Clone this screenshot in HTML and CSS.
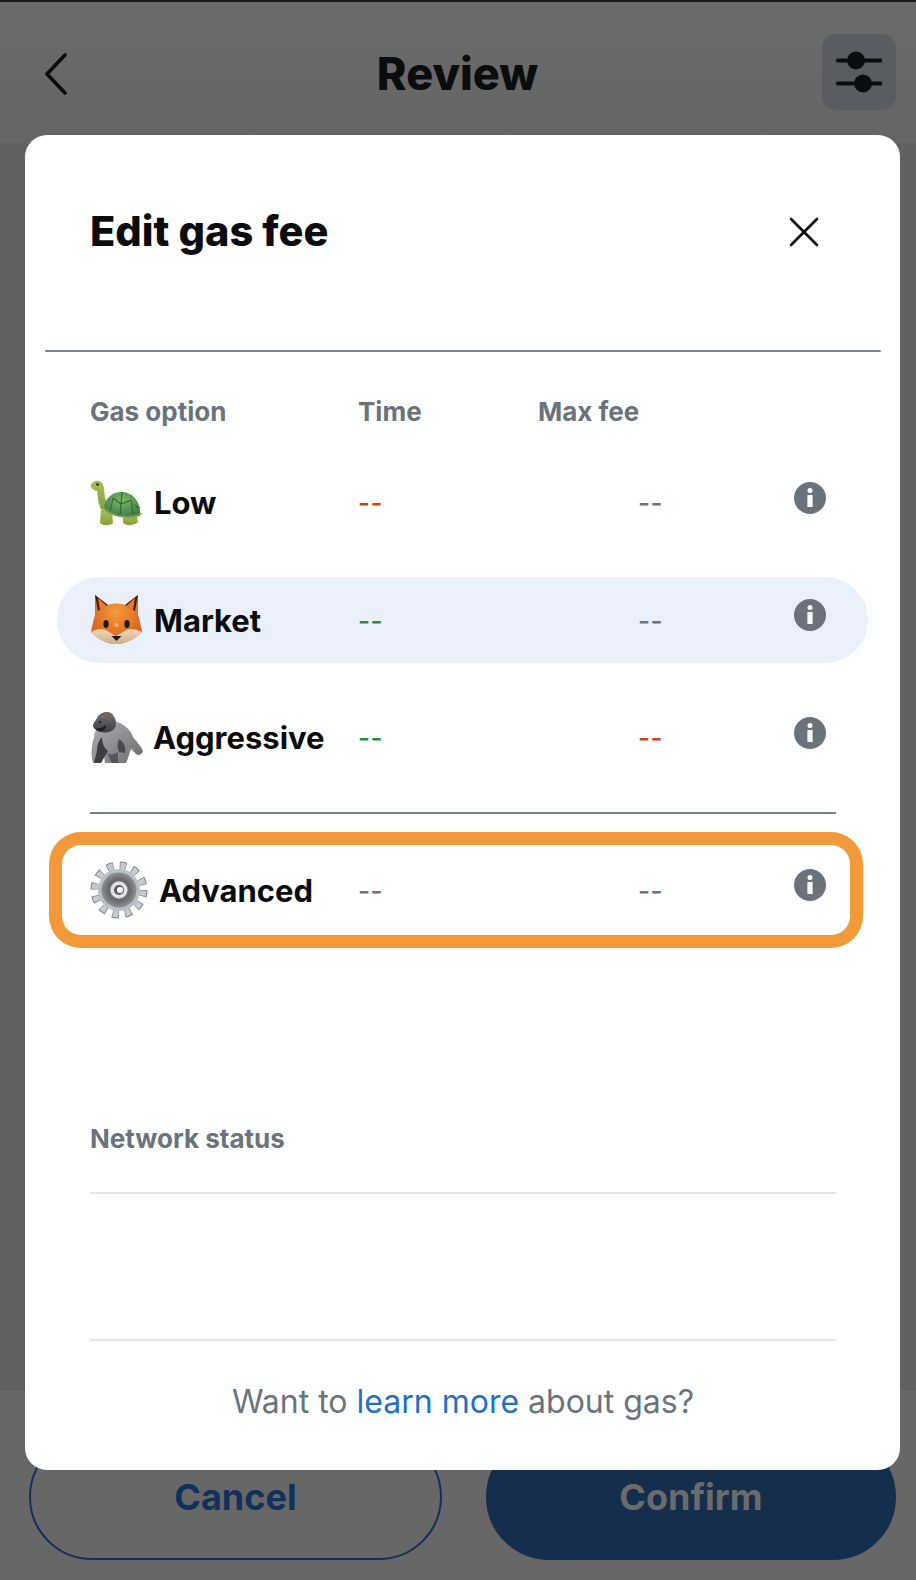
FILE: index.html
```html
<!DOCTYPE html>
<html lang="en">
<head>
  <meta charset="UTF-8" />
  <meta name="viewport" content="width=device-width, initial-scale=1.0" />
  <title>Edit gas fee</title>
  <link rel="stylesheet" href="styles.css">
</head>
<body>
  <div class="page">
    <header class="topbar">
      <svg class="back" width="26" height="42" viewBox="0 0 26 42"><path d="M22 2 L4 21 L22 40" fill="none" stroke="#0b0c0d" stroke-width="3.6" stroke-linecap="round" stroke-linejoin="round"/></svg>
      <h1>Review</h1>
      <div class="filter-btn">
        <svg width="46" height="46" viewBox="0 0 46 46">
          <path d="M2 11.5H10M27 11.5H45M2 34.5H17M34 34.5H45" stroke="#0b0c0d" stroke-width="4" stroke-linecap="round"/>
          <circle cx="20" cy="11.5" r="9" fill="#0b0c0d"/>
          <circle cx="27" cy="34.5" r="9" fill="#0b0c0d"/>
        </svg>
      </div>
    </header>
    <div class="middle"></div>
    <footer class="actions">
      <button class="btn btn-cancel">Cancel</button>
      <button class="btn btn-confirm">Confirm</button>
    </footer>
  </div>

  <section class="modal">
    <div class="modal-head">
      <h2>Edit gas fee</h2>
      <svg class="close" width="30" height="30" viewBox="0 0 30 30"><path d="M2 2L28 28M28 2L2 28" stroke="#0b0c0d" stroke-width="2.6" stroke-linecap="round"/></svg>
    </div>
    <div class="head-rule"></div>

    <div class="row labels">
      <span>Gas option</span>
      <span>Time</span>
      <span>Max fee</span>
    </div>

    <div class="row option">
      <div class="name">
        <svg class="emoji" width="53" height="46" viewBox="0 0 53 46">
          <defs>
            <radialGradient id="shell" cx="50%" cy="35%" r="65%"><stop offset="0" stop-color="#7fb56d"/><stop offset="1" stop-color="#3f7d45"/></radialGradient>
            <linearGradient id="skin" x1="0" y1="0" x2="0" y2="1"><stop offset="0" stop-color="#a6c052"/><stop offset="1" stop-color="#84a23f"/></linearGradient>
          </defs>
          <path d="M1 5C2 1 9 -1 12 3C15 7 14 12 15 17C16 22 18 25 20 28L12 31C8 25 8 17 7 11C4 10 0 8 1 5Z" fill="url(#skin)"/>
          <circle cx="7.5" cy="4.5" r="1.3" fill="#1d2410"/>
          <path d="M11 29H22L23 43C20 46 13 46 10 43Z" fill="url(#skin)"/>
          <path d="M33 32H46L48 42C44 46 36 46 33 43Z" fill="url(#skin)"/>
          <path d="M46 30L53 34L45 36Z" fill="#a9bf55"/>
          <path d="M14 28C15 17 24 11 33 12C43 13 51 22 50 35C40 38 22 38 14 28Z" fill="url(#shell)"/>
          <path d="M23 18L31 24L41 20M31 24L30 35M41 20L43 34M23 18L20 31M32 12L31 24M44 25L50 28" fill="none" stroke="#2e6536" stroke-width="1.1"/>
          <path d="M14 28C22 38 40 38 50 35" fill="none" stroke="#7c9a42" stroke-width="2"/>
        </svg>
        <span>Low</span>
      </div>
      <span class="dash warn">--</span>
      <span class="dash muted">--</span>
      <svg class="info" width="32" height="32" viewBox="0 0 32 32"><circle cx="16" cy="16" r="16" fill="#6a737d"/><circle cx="16" cy="8.6" r="2.5" fill="#fff"/><rect x="13.4" y="13" width="5.2" height="12" rx="0.6" fill="#fff"/></svg>
    </div>

    <div class="row option selected">
      <div class="name">
        <svg class="emoji" width="53" height="50" viewBox="0 0 53 50">
          <defs>
            <radialGradient id="fur" cx="50%" cy="35%" r="60%"><stop offset="0" stop-color="#f59b3c"/><stop offset="1" stop-color="#d9601c"/></radialGradient>
            <linearGradient id="cream" x1="0" y1="0" x2="0" y2="1"><stop offset="0" stop-color="#efd9b8"/><stop offset="1" stop-color="#cfae8a"/></linearGradient>
          </defs>
          <path d="M5 0L18 10C23 8 30 8 35 10L48 0L48 20C50 26 51 32 52 37C46 43 36 49 26 49C16 49 7 43 1 37C2 32 3 26 5 20Z" fill="url(#fur)"/>
          <path d="M5 0L18 10L8 16Z M48 0L35 10L45 16Z" fill="#3a2418"/>
          <path d="M8 3L17 11L10 15Z M45 3L36 11L43 15Z" fill="#e8792a"/>
          <path d="M1 37C8 33 14 33 19 37L26 41L33 37C38 33 45 33 52 37C46 43 36 49 26 49C16 49 7 43 1 37Z" fill="url(#cream)"/>
          <ellipse cx="16" cy="29" rx="2.6" ry="4" fill="#1d1a1a"/>
          <ellipse cx="37" cy="29" rx="2.6" ry="4" fill="#1d1a1a"/>
          <path d="M21.500 41H31.500L26.500 46Z" fill="#1d1a1a"/>
          <circle cx="26.500" cy="30" r="2" fill="#f6b06a"/>
        </svg>
        <span>Market</span>
      </div>
      <span class="dash good">--</span>
      <span class="dash muted">--</span>
      <svg class="info" width="32" height="32" viewBox="0 0 32 32"><circle cx="16" cy="16" r="16" fill="#6a737d"/><circle cx="16" cy="8.6" r="2.5" fill="#fff"/><rect x="13.4" y="13" width="5.2" height="12" rx="0.6" fill="#fff"/></svg>
    </div>

    <div class="row option">
      <div class="name">
        <svg class="emoji" width="53" height="53" viewBox="0 0 53 53">
          <defs>
            <linearGradient id="ape" x1="0" y1="0" x2="1" y2="1"><stop offset="0" stop-color="#b0b0b4"/><stop offset="1" stop-color="#6b6b70"/></linearGradient>
            <linearGradient id="apeDark" x1="0" y1="0" x2="0" y2="1"><stop offset="0" stop-color="#77747a"/><stop offset="1" stop-color="#3c3b40"/></linearGradient>
          </defs>
          <path d="M8 16L22 10C33 11 40 18 43 26C46 30 51 35 53 40C52 44 48 45 46 43L41 38C39 43 38 48 36 52H29L28 41C25 44 23 48 22 52H15L14 45L11 52H3C1 44 1 34 4 27C4 23 5 19 8 16Z" fill="url(#ape)"/>
          <path d="M7 40C7 34 9 29 12 26C12 32 14 37 18 40L15 45L11 52H4Z" fill="#3e3d42"/>
          <path d="M17 42C20 44 24 44 28 41L29 52H22Z" fill="#56555a"/>
          <path d="M29 28C33 30 36 35 35 42L29 41C27 37 27 32 29 28Z" fill="#4a494f"/>
          <path d="M7 7C9 1 19 -1 23 4C27 9 27 15 23 19C18 23 9 22 4 17C1 14 5 11 7 7Z" fill="url(#apeDark)"/>
          <path d="M10 4C14 0 20 0 23 4C19 6 14 6 10 4Z" fill="#81605a"/>
          <path d="M4 17C8 18 13 17 16 14C16 18 12 22 8 20Z" fill="#1d1c20"/>
          <circle cx="10" cy="11" r="1.1" fill="#111"/>
        </svg>
        <span class="tight">Aggressive</span>
      </div>
      <span class="dash good">--</span>
      <span class="dash warn">--</span>
      <svg class="info" width="32" height="32" viewBox="0 0 32 32"><circle cx="16" cy="16" r="16" fill="#6a737d"/><circle cx="16" cy="8.6" r="2.5" fill="#fff"/><rect x="13.4" y="13" width="5.2" height="12" rx="0.6" fill="#fff"/></svg>
    </div>

    <div class="rule dark"></div>

    <div class="advanced">
      <div class="row option">
        <div class="name">
          <svg class="emoji" width="58" height="58" viewBox="0 0 58 58">
            <defs>
              <radialGradient id="disc" cx="50%" cy="50%" r="50%"><stop offset="0" stop-color="#c8c8cb"/><stop offset="0.6" stop-color="#66666b"/><stop offset="1" stop-color="#8e9094"/></radialGradient>
            </defs>
            <circle cx="29" cy="29" r="24.500" fill="none" stroke="#7b8085" stroke-width="8" stroke-dasharray="6.500 6.330"/>
            <circle cx="29" cy="29" r="24" fill="none" stroke="#c3ccd3" stroke-width="7" stroke-dasharray="5 7.570" stroke-dashoffset="-0.750"/>
            <circle cx="29" cy="29" r="21" fill="#b8c0c8"/>
            <circle cx="29" cy="29" r="17.500" fill="url(#disc)"/>
            <circle cx="29" cy="29" r="8.500" fill="#e2e2e4"/>
            <circle cx="29" cy="29" r="5" fill="#5e5e64"/>
            <circle cx="30" cy="29" r="3" fill="#fff"/>
          </svg>
          <span>Advanced</span>
        </div>
        <span class="dash muted">--</span>
        <span class="dash muted">--</span>
        <svg class="info" width="32" height="32" viewBox="0 0 32 32"><circle cx="16" cy="16" r="16" fill="#6a737d"/><circle cx="16" cy="8.6" r="2.5" fill="#fff"/><rect x="13.4" y="13" width="5.2" height="12" rx="0.6" fill="#fff"/></svg>
      </div>
    </div>

    <div class="status-label">Network status</div>
    <div class="rule"></div>
    <div class="status-body"></div>
    <div class="rule"></div>

    <p class="learn">Want to <a href="#">learn more</a> about gas?</p>
  </section>
</body>
</html>
```

FILE: styles.css
```css
* {
  box-sizing: border-box;
}

body {
  margin: 0;
  width: 916px;
  height: 1580px;
  overflow: hidden;
  font-family: "Inter", "Liberation Sans", sans-serif;
  background-color: #676767;
  color: #0b0c0d;
}

.page {
  height: 1580px;
  display: flex;
  flex-direction: column;
  border-top: 2px solid #1a1a1a;
}

.topbar {
  height: 141px;
  flex: none;
  padding: 32px 20px 0 43px;
  display: flex;
  align-items: flex-start;
  justify-content: space-between;
  background: linear-gradient(#6b6b6b, #656565);
}

.back {
  margin-top: 19px;
}

.topbar h1 {
  margin: 7px 0 0 24px;
  font-size: 45px;
  line-height: 66px;
  font-weight: 800;
}

.filter-btn {
  width: 74px;
  height: 76px;
  display: flex;
  align-items: center;
  justify-content: center;
  background-color: #595c60;
  border-radius: 14px;
}

.middle {
  flex: 1;
  background-color: #5f6163;
}

.actions {
  height: 190px;
  flex: none;
  padding: 44px 20px 20px 29px;
  display: flex;
  gap: 44px;
  background-color: #676767;
}

.btn {
  height: 126px;
  border-radius: 63px;
  font-family: inherit;
  font-size: 36px;
  font-weight: 700;
}

.btn-cancel {
  width: 413px;
  background: transparent;
  border: 2px solid #12305c;
  color: #12305c;
}

.btn-confirm {
  flex: 1;
  background-color: #152e4e;
  border: 2px solid #152e4e;
  color: #6b6b6b;
}

/* modal sits over the dimmed page */
.modal {
  position: absolute;
  top: 135px;
  left: 25px;
  width: 875px;
  height: 1335px;
  padding: 0 64px 0 65px;
  background-color: #fff;
  border-radius: 22px;
}

.modal-head {
  height: 215px;
  padding-top: 66px;
  display: flex;
  align-items: flex-start;
  justify-content: space-between;
  padding-right: 17px;
}

.modal-head h2 {
  margin: 0;
  font-size: 41.5px;
  line-height: 60px;
  font-weight: 800;
}

.close {
  margin-top: 16px;
}

.head-rule {
  height: 2px;
  margin: 0 -45px;
  background-color: #78828e;
  border-radius: 2px;
}

.row {
  display: grid;
  grid-template-columns: 268px 280px 1fr 32px;
  align-items: center;
}

.labels {
  grid-template-columns: 268px 180px 1fr;
  margin-top: 42px;
  height: 34px;
  font-size: 26px;
  font-weight: 700;
  color: #6a737d;
}

.option {
  height: 85px;
  margin-top: 32px;
  padding-right: 10px;
  font-size: 31px;
  font-weight: 700;
}

.selected {
  height: 86px;
  margin: 32px -32px 0 -33px;
  padding: 0 42px 0 33px;
  background-color: #e9f0f9;
  border-radius: 43px;
}

.name {
  display: flex;
  align-items: center;
  gap: 11px;
  white-space: nowrap;
}

.tight {
  margin-left: -1px;
}

.dash {
  font-size: 26px;
  font-weight: 500;
  letter-spacing: 0.5px;
}

.warn {
  color: #c4490f;
}

.good {
  color: #2b8a3e;
}

.muted {
  color: #6a737d;
}

.info {
  margin-top: -10px;
}

.rule {
  height: 2px;
  background-color: #e4e5e7;
}

.dark {
  margin-top: 32px;
  background-color: #78828e;
}

.advanced {
  height: 116px;
  margin: 18px -27px 0 -41px;
  padding: 0 27px 0 41px;
  border-radius: 32px;
  box-shadow: inset 0 0 0 13px #f29a3a;
}

.advanced .option {
  height: 116px;
  margin-top: 0;
}

.status-label {
  margin-top: 175px;
  height: 34px;
  font-size: 26px;
  font-weight: 700;
  color: #6a737d;
}

.status-label + .rule {
  margin-top: 35px;
}

.status-body {
  height: 145px;
}

.learn {
  margin: 39px 0 0;
  text-align: center;
  font-size: 32px;
  line-height: 44px;
  color: #6a737d;
}

.learn a {
  color: #1f6fc9;
  text-decoration: none;
}
```
